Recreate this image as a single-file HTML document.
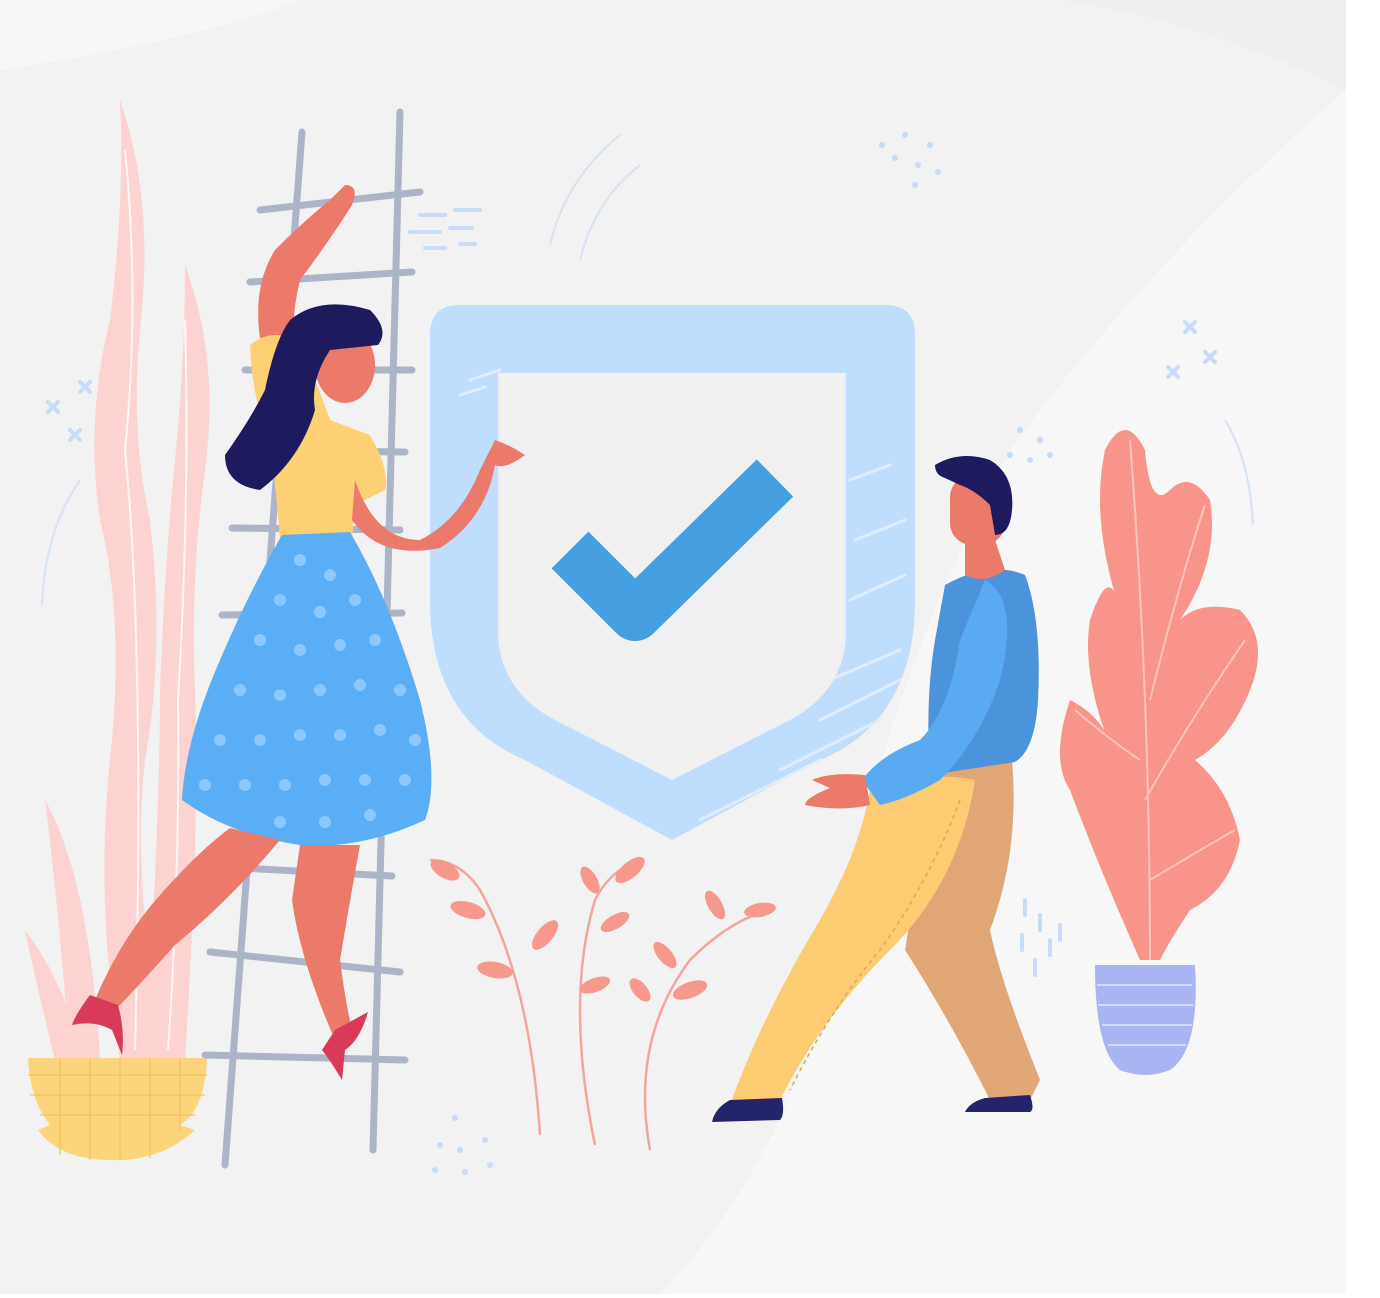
<!DOCTYPE html>
<html><head><meta charset="utf-8"><style>
html,body{margin:0;padding:0;background:#fff;}
svg{display:block;}
</style></head><body>
<svg width="1380" height="1298" viewBox="0 0 1380 1298" xmlns="http://www.w3.org/2000/svg">
<!-- background -->
<rect x="0" y="0" width="1380" height="1298" fill="#ffffff"/>
<rect x="0" y="0" width="1346" height="1294" fill="#f2f2f2"/>
<path d="M0 0 H300 Q200 40 0 70 Z" fill="#f7f7f7"/>
<path d="M1346 90 Q1150 260 1010 450 Q880 700 850 900 Q800 1150 660 1294 H1346 Z" fill="#f7f7f7"/>
<path d="M1060 0 Q1200 20 1346 90 V0 Z" fill="#efefef"/>

<!-- decorative dots -->
<g fill="#c7dcf7">
<circle cx="882" cy="145" r="3"/><circle cx="905" cy="135" r="3"/><circle cx="895" cy="158" r="3"/><circle cx="918" cy="165" r="3"/><circle cx="915" cy="185" r="3"/><circle cx="938" cy="172" r="3"/><circle cx="930" cy="145" r="3"/>
<circle cx="1020" cy="430" r="3"/><circle cx="1040" cy="440" r="3"/><circle cx="1030" cy="460" r="3"/><circle cx="1050" cy="455" r="3"/><circle cx="1010" cy="455" r="3"/>
<circle cx="440" cy="1145" r="3"/><circle cx="460" cy="1150" r="3"/><circle cx="485" cy="1140" r="3"/><circle cx="435" cy="1170" r="3"/><circle cx="465" cy="1172" r="3"/><circle cx="490" cy="1165" r="3"/><circle cx="455" cy="1118" r="3"/>
</g>
<g stroke="#c7dcf7" stroke-width="4" stroke-linecap="round">
<path d="M1185 322 l10 10 M1195 322 l-10 10 M1168 367 l10 10 M1178 367 l-10 10 M1205 352 l10 10 M1215 352 l-10 10"/>
<path d="M48 402 l10 10 M58 402 l-10 10 M80 382 l10 10 M90 382 l-10 10 M70 430 l10 10 M80 430 l-10 10"/>
<path d="M1025 900 v15 M1040 915 v15 M1022 935 v15 M1050 940 v15 M1035 960 v15 M1060 925 v15"/>
</g>
<g fill="none" stroke="#d6e3f5" stroke-width="2">
<path d="M620 135 Q565 180 550 245"/><path d="M640 165 Q595 200 580 260"/>
<path d="M80 480 Q45 530 42 605"/><path d="M1225 420 Q1250 460 1253 525"/>
</g>
<g stroke="#c7dcf7" stroke-width="4" stroke-linecap="round">
<path d="M420 215 h25 M455 210 h25 M410 232 h30 M450 228 h22 M425 248 h20 M460 244 h15"/>
</g>

<!-- left plants -->
<g fill="#fdd3d1">
<path d="M120 100 Q155 200 140 330 Q130 430 150 520 Q165 650 145 760 Q130 900 170 1060 H120 Q95 900 110 760 Q125 620 100 520 Q85 420 110 320 Q125 200 120 100 Z"/>
<path d="M185 265 Q220 360 205 470 Q190 580 195 690 Q200 820 185 1060 H145 Q160 820 160 690 Q165 560 175 460 Q185 360 185 265 Z"/>
<path d="M45 800 Q90 880 100 1060 H70 Q60 920 45 800 Z"/>
<path d="M25 930 Q70 990 80 1060 H55 Q40 1000 25 930 Z"/>
</g>
<g fill="none" stroke="#fff" stroke-width="2" opacity="0.8">
<path d="M125 150 Q140 300 125 450 Q145 650 135 1050"/><path d="M185 320 Q190 500 178 700 Q180 880 168 1050"/>
</g>
<!-- yellow pot -->
<path d="M28 1058 H207 Q205 1110 180 1125 Q195 1130 195 1130 Q160 1162 110 1160 Q60 1160 38 1130 L50 1125 Q30 1100 28 1058 Z" fill="#fcd47c"/>
<g stroke="#f1bd55" stroke-width="1.5" opacity="0.7">
<path d="M28 1075 H207 M30 1095 H205 M40 1115 H195 M60 1058 V1155 M90 1058 V1160 M120 1058 V1160 M150 1058 V1158 M180 1058 V1130"/>
</g>

<!-- ladder -->
<g stroke="#abb5c7" stroke-width="7" stroke-linecap="round">
<path d="M302 132 L225 1165"/><path d="M400 112 L373 1150"/>
<path d="M260 210 L420 192"/><path d="M250 282 L412 272"/><path d="M245 370 L412 370"/>
<path d="M240 450 L405 452"/><path d="M232 528 L400 530"/><path d="M222 615 L402 613"/>
<path d="M240 868 L392 876"/><path d="M210 952 L400 972"/><path d="M205 1055 L405 1060"/>
</g>

<!-- shield -->
<path d="M430 335 Q430 305 460 305 H885 Q915 305 915 335 V600 Q915 720 820 760 L672 840 L525 760 Q430 720 430 600 Z" fill="#bfddfc"/>
<path d="M498 373 H846 V630 Q846 690 790 720 L672 780 L555 720 Q498 690 498 630 Z" fill="#f0f0f0"/>
<g stroke="#e3eefb" stroke-width="3" stroke-linecap="round" opacity="0.9">
<path d="M850 480 l40 -15 M855 540 l50 -20 M850 600 l55 -25 M830 680 l70 -30 M820 720 l80 -40 M780 770 l100 -50 M700 820 l120 -60 M470 380 l30 -10 M460 395 l25 -8"/>
</g>
<path d="M570 550 L635 615 L775 478" fill="none" stroke="#449ee0" stroke-width="52" stroke-linejoin="round"/>

<!-- bottom middle plants -->
<g fill="none" stroke="#f2a59c" stroke-width="2.5">
<path d="M540 1135 Q530 980 480 890 Q460 860 430 860"/><path d="M595 1145 Q565 1000 595 900 Q610 870 640 860"/><path d="M650 1150 Q630 1040 690 960 Q730 920 770 910"/>
</g>
<g fill="#f6988c">
<ellipse cx="445" cy="870" rx="16" ry="8" transform="rotate(30 445 870)"/>
<ellipse cx="468" cy="910" rx="18" ry="8" transform="rotate(15 468 910)"/>
<ellipse cx="545" cy="935" rx="18" ry="8" transform="rotate(-50 545 935)"/>
<ellipse cx="495" cy="970" rx="18" ry="8" transform="rotate(10 495 970)"/>
<ellipse cx="630" cy="870" rx="18" ry="8" transform="rotate(-40 630 870)"/>
<ellipse cx="590" cy="880" rx="15" ry="7" transform="rotate(60 590 880)"/>
<ellipse cx="615" cy="922" rx="16" ry="7" transform="rotate(-30 615 922)"/>
<ellipse cx="595" cy="985" rx="16" ry="7" transform="rotate(-20 595 985)"/>
<ellipse cx="760" cy="910" rx="16" ry="7" transform="rotate(-10 760 910)"/>
<ellipse cx="715" cy="905" rx="16" ry="7" transform="rotate(60 715 905)"/>
<ellipse cx="665" cy="955" rx="16" ry="7" transform="rotate(50 665 955)"/>
<ellipse cx="690" cy="990" rx="18" ry="8" transform="rotate(-20 690 990)"/>
<ellipse cx="640" cy="990" rx="14" ry="7" transform="rotate(50 640 990)"/>
</g>

<!-- right plant -->
<path d="M1140 960 Q1100 870 1070 790 Q1050 760 1070 700 Q1110 720 1120 770 Q1080 680 1090 620 Q1110 560 1120 610 Q1090 520 1105 450 Q1125 410 1145 450 Q1150 510 1170 490 Q1190 470 1210 500 Q1220 560 1180 620 Q1200 600 1240 610 Q1270 640 1250 690 Q1230 740 1195 760 Q1230 790 1240 840 Q1230 890 1190 910 Q1170 940 1160 960 Z" fill="#f8948a"/>
<g fill="none" stroke="#fbc4bc" stroke-width="2">
<path d="M1150 960 Q1150 700 1130 440"/><path d="M1145 800 Q1190 720 1245 640"/><path d="M1150 700 Q1180 580 1205 505"/><path d="M1150 880 Q1200 850 1235 830"/><path d="M1140 760 Q1110 740 1075 710"/>
</g>
<path d="M1095 965 H1195 Q1200 1050 1170 1070 Q1145 1080 1120 1070 Q1095 1050 1095 965 Z" fill="#a9b4f2"/>
<g stroke="#d5dafa" stroke-width="2"><path d="M1097 985 h95 M1098 1005 h95 M1102 1025 h90 M1108 1045 h78"/></g>

<!-- woman -->
<!-- raised arm -->
<path d="M262 350 Q250 290 275 250 Q305 220 330 200 L345 185 Q360 185 352 205 Q330 240 300 280 Q290 320 295 355 Z" fill="#ec7a6a"/>
<!-- torso top -->
<path d="M250 345 Q275 325 300 345 Q320 390 330 420 L370 435 Q390 470 385 490 L355 505 L352 540 L280 540 Q275 480 270 440 Q252 400 250 345 Z" fill="#fdd074"/>
<!-- reaching arm -->
<path d="M355 480 Q375 540 420 540 Q460 520 480 470 L495 440 Q510 445 525 455 Q505 470 495 465 Q485 520 440 548 Q380 560 352 520 Z" fill="#ec7a6a"/>
<!-- head -->
<ellipse cx="345" cy="365" rx="30" ry="38" fill="#ec7a6a"/>
<path d="M290 320 Q320 295 370 310 Q390 330 378 345 L330 350 Q310 380 315 410 Q300 460 260 490 Q225 485 225 455 Q250 420 265 390 Q275 340 290 320 Z" fill="#1e1a5e"/>
<!-- skirt -->
<path d="M282 535 L350 532 Q390 600 420 700 Q440 780 425 820 Q360 850 300 845 Q230 835 182 800 Q185 740 220 660 Q250 590 282 535 Z" fill="#5aaef5"/>
<g fill="#8cc8fb">
<circle cx="300" cy="560" r="6"/><circle cx="330" cy="575" r="6"/><circle cx="280" cy="600" r="6"/><circle cx="320" cy="612" r="6"/><circle cx="355" cy="600" r="6"/>
<circle cx="260" cy="640" r="6"/><circle cx="300" cy="650" r="6"/><circle cx="340" cy="645" r="6"/><circle cx="375" cy="640" r="6"/>
<circle cx="240" cy="690" r="6"/><circle cx="280" cy="695" r="6"/><circle cx="320" cy="690" r="6"/><circle cx="360" cy="685" r="6"/><circle cx="400" cy="690" r="6"/>
<circle cx="220" cy="740" r="6"/><circle cx="260" cy="740" r="6"/><circle cx="300" cy="735" r="6"/><circle cx="340" cy="735" r="6"/><circle cx="380" cy="730" r="6"/><circle cx="415" cy="740" r="6"/>
<circle cx="205" cy="785" r="6"/><circle cx="245" cy="785" r="6"/><circle cx="285" cy="785" r="6"/><circle cx="325" cy="780" r="6"/><circle cx="365" cy="780" r="6"/><circle cx="405" cy="780" r="6"/>
<circle cx="280" cy="822" r="6"/><circle cx="325" cy="822" r="6"/><circle cx="370" cy="815" r="6"/>
</g>
<!-- legs -->
<path d="M230 828 L280 840 Q230 900 175 945 Q135 990 115 1010 L95 1000 Q120 940 160 895 Q200 850 230 828 Z" fill="#ec7a6a"/>
<path d="M300 845 L360 845 Q350 900 340 960 Q345 1000 352 1030 L335 1040 Q300 960 292 900 Z" fill="#ec7a6a"/>
<path d="M90 995 Q75 1015 72 1025 Q95 1020 112 1030 L122 1055 Q125 1030 118 1005 Z" fill="#d93a5a"/>
<path d="M335 1030 L368 1012 Q360 1040 345 1050 L342 1080 Q330 1060 322 1050 Z" fill="#d93a5a"/>

<!-- man -->
<!-- back leg -->
<path d="M935 770 L1012 760 Q1020 850 990 930 Q1000 980 1040 1080 L1030 1100 L990 1100 Q950 1020 905 950 Z" fill="#e0a675"/>
<!-- front leg -->
<path d="M870 790 Q930 770 975 780 Q960 880 890 950 Q820 1020 780 1100 L730 1105 Q760 1020 820 920 Q860 850 870 790 Z" fill="#fccb72"/>
<path d="M960 800 Q930 880 880 950 Q830 1010 790 1090" fill="none" stroke="#d9a955" stroke-width="1.5" stroke-dasharray="4 4"/>
<!-- shoes -->
<path d="M730 1100 L782 1098 Q785 1115 780 1120 L712 1122 Q715 1108 730 1100 Z" fill="#24246b"/>
<path d="M985 1098 L1030 1095 Q1035 1110 1030 1112 L965 1112 Q970 1102 985 1098 Z" fill="#24246b"/>
<!-- torso -->
<path d="M945 585 Q990 560 1025 575 Q1042 620 1038 700 Q1035 750 1015 762 L930 775 Q925 700 935 640 Z" fill="#4b93da"/>
<!-- arm -->
<path d="M985 580 Q1020 600 1000 680 Q980 740 940 780 Q905 800 880 805 L862 780 Q880 755 920 740 Q950 710 960 640 Z" fill="#5aaaf2"/>
<!-- hand -->
<path d="M865 775 Q830 772 812 780 L830 788 Q805 798 805 805 Q840 812 870 805 Z" fill="#ec7a6a"/>
<!-- neck & head -->
<path d="M965 540 L995 540 L1005 570 Q985 585 965 575 Z" fill="#ec7a6a"/>
<rect x="950" y="475" width="55" height="70" rx="22" fill="#ec7a6a"/>
<path d="M935 465 Q960 450 990 460 Q1015 475 1012 510 Q1010 535 995 535 L990 505 Q975 490 960 485 L945 478 Q935 475 935 465 Z" fill="#1e1a5e"/>
</svg>
</body></html>
